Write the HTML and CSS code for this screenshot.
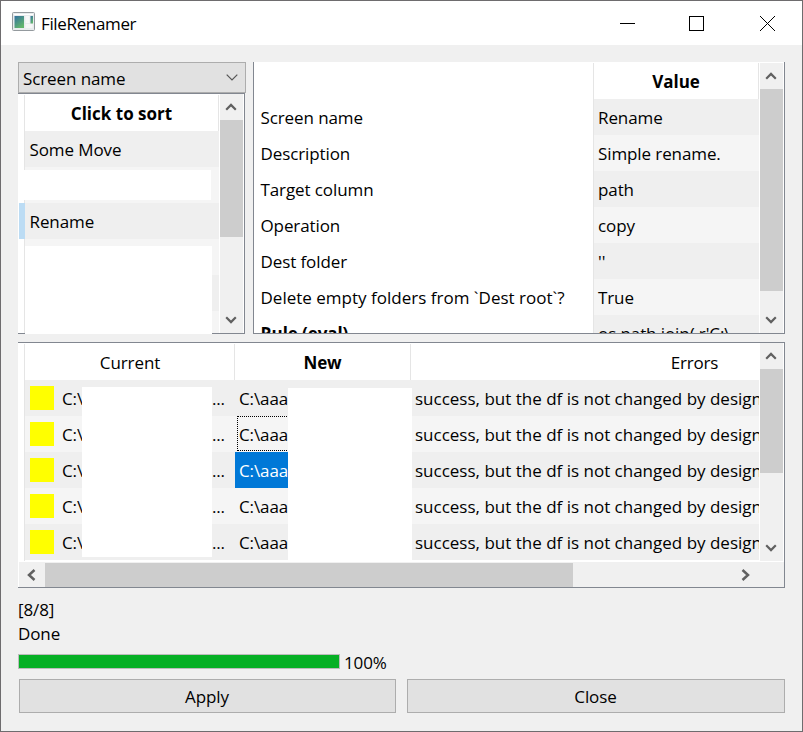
FILE: index.html
```
<!DOCTYPE html>
<html lang="en">
<head>
<meta charset="utf-8">
<title>FileRenamer</title>
<link rel="stylesheet" href="styles.css">
</head>
<body>
<svg width="0" height="0" class="defs">
  <symbol id="up" viewBox="0 0 12 8"><path d="M1.200 6.700 6 1.900l4.800 4.800" fill="none" stroke="#606060" stroke-width="2.200"/></symbol>
  <symbol id="down" viewBox="0 0 12 8"><path d="M1.200 1.300 6 6.100l4.800-4.800" fill="none" stroke="#606060" stroke-width="2.200"/></symbol>
</svg>
<div class="window">
  <header class="titlebar">
    <svg class="appicon" width="23" height="19" viewBox="0 0 23 19">
      <defs><linearGradient id="g" x1="0" y1="0" x2=".6" y2="1"><stop offset="0" stop-color="#3270a0"/><stop offset="1" stop-color="#63b66c"/></linearGradient></defs>
      <rect x=".5" y=".5" width="22" height="18" rx="1" fill="#e9ecee" stroke="#949a9e"/>
      <path d="M2 2.500h19" stroke="#fff"/>
      <rect x="2.500" y="4" width="9.500" height="12" fill="url(#g)"/>
      <rect x="13.500" y="4" width="4" height="7" fill="#f8f8f8"/><rect x="13.500" y="12" width="7" height="4" fill="#f6f6f6"/>
      <rect x="18.500" y="4" width="2.500" height="7.500" fill="url(#g)"/>
    </svg>
    <span class="title">FileRenamer</span>
    <svg class="winbtns" width="156" height="16" viewBox="0 0 156 16" fill="none" stroke="#000" shape-rendering="crispEdges">
      <path d="M0 8.500h15M69.500 1.500h14v14h-14z"/><path d="M140 1l15 15M155 1l-15 15" shape-rendering="auto"/>
    </svg>
  </header>
  <main class="content">
    <div class="top">
      <section class="left">
        <div class="combo"><span>Screen name</span><svg width="12" height="7" viewBox="0 0 12 7"><path d="M.7.700 6 6 11.300.7" fill="none" stroke="#555" stroke-width="1.200"/></svg></div>
        <div class="panel list">
          <div class="gutter"><i class="current"></i></div>
          <div class="rows">
            <div class="head sort"><span>Click to sort</span></div>
            <div class="row">Some Move</div><div class="row"></div><div class="row">Rename</div><div class="row"></div><div class="row"></div><div class="row"></div>
          </div>
          <div class="vscroll"><div class="arrow"><svg><use href="#up"/></svg></div><div class="thumb"></div><div class="arrow end"><svg><use href="#down"/></svg></div></div>
          <i class="mask m1"></i><i class="mask m2"></i>
        </div>
      </section>
      <section class="panel props">
        <div class="names"><div class="head"></div><div>Screen name</div><div>Description</div><div>Target column</div><div>Operation</div><div>Dest folder</div><div class="delete">Delete empty folders from `Dest root`?</div><div class="bold">Rule (eval)</div></div>
        <div class="rows values"><div class="head"><span>Value</span></div><div class="row">Rename</div><div class="row">Simple rename.</div><div class="row">path</div><div class="row">copy</div><div class="row">''</div><div class="row">True</div><div class="row">os.path.join( r'C:\</div></div>
        <div class="vscroll"><div class="arrow"><svg><use href="#up"/></svg></div><div class="thumb"></div><div class="arrow end"><svg><use href="#down"/></svg></div></div>
      </section>
    </div>
    <section class="panel results">
      <div class="grid">
        <div class="gutter"></div>
        <div class="rows table">
          <div class="line head"><span class="c1">Current</span><span class="c2 bold">New</span><span class="c3">Errors</span></div>
          <div class="line row"><span class="c1"><i></i><b>C:\</b><em>...</em></span><span class="c2">C:\aaa</span><span class="c3">success, but the df is not changed by design</span></div>
          <div class="line row"><span class="c1"><i></i><b>C:\</b><em>...</em></span><span class="c2 focus">C:\aaa</span><span class="c3">success, but the df is not changed by design</span></div>
          <div class="line row"><span class="c1"><i></i><b>C:\</b><em>...</em></span><span class="c2 selected">C:\aaa</span><span class="c3">success, but the df is not changed by design</span></div>
          <div class="line row"><span class="c1"><i></i><b>C:\</b><em>...</em></span><span class="c2">C:\aaa</span><span class="c3">success, but the df is not changed by design</span></div>
          <div class="line row"><span class="c1"><i></i><b>C:\</b><em>...</em></span><span class="c2">C:\aaa</span><span class="c3">success, but the df is not changed by design</span></div>
        </div>
        <div class="vscroll"><div class="arrow"><svg><use href="#up"/></svg></div><div class="thumb"></div><div class="arrow end"><svg><use href="#down"/></svg></div></div>
      </div>
      <div class="hscroll"><svg class="prev" width="9" height="12" viewBox="0 0 9 12"><path d="M7.500 1 2 6l5.500 5" fill="none" stroke="#606060" stroke-width="2.500"/></svg><div class="hthumb"></div><svg class="next" width="9" height="12" viewBox="0 0 9 12"><path d="M1.500 1 7 6l-5.500 5" fill="none" stroke="#606060" stroke-width="2.500"/></svg></div>
      <i class="mask m3"></i><i class="mask m4"></i>
    </section>
    <div class="status"><div>[8/8]</div><div>Done</div></div>
    <div class="progress"><div class="bar"><div class="fill" style="width:100%"></div></div><span>100%</span></div>
    <div class="buttons"><button>Apply</button><button>Close</button></div>
  </main>
</div>
</body>
</html>
```
FILE: styles.css
```
* { box-sizing: border-box; }
body { margin: 0; overflow: hidden; font: 17px/38px "Open Sans", sans-serif; letter-spacing: -.1px; color: #000; }
.defs { position: absolute; }
.window { width: 803px; height: 732px; border: 1px solid #6e6c6e; background: #f0f0f0; }
.titlebar { height: 44px; background: #fff; display: flex; align-items: center; padding: 0 26px 0 11px; }
.appicon { margin-top: -3px; }
.title { margin-left: 6px; margin-top: 1px; letter-spacing: -.35px; }
.winbtns { margin-left: auto; margin-top: -1px; }
.content { padding: 17px 17px 0; }
.top { display: flex; gap: 7px; height: 272px; }
.left { width: 228px; }
.combo { width: 228px; height: 31px; border: 1px solid #adadad; background: #e1e1e1; display: flex; align-items: center; justify-content: space-between; padding: 0 7px 0 4px; line-height: 29px; }
.combo span { padding-top: 2px; }
.panel { position: relative; display: flex; background: #fff; overflow: hidden; border-right: 1px solid #828790; border-bottom: 1px solid #828790; }
.list { width: 227px; height: 241px; border-top: 1px solid #828790; padding-top: 1px; overflow: visible; clip-path: inset(0); }
.gutter { width: 7px; border-right: 1px solid #e5e5e5; flex: none; }
.list .gutter { padding: 108px 0 0 1px; }
.current { display: block; width: 6px; height: 36px; background: #bcdcf4; }
.rows { overflow: hidden; white-space: nowrap; }
.list .rows { width: 194px; height: 238px; }
.head { height: 36px; background: #fff; text-align: center; font-weight: bold; letter-spacing: 0; }
.sort { border-right: 1px solid #e5e5e5; }
.row { height: 36px; padding-left: 4.500px; background: #efefef; }
.row:nth-child(odd) { background: #f5f5f5; }
.vscroll { width: 23px; margin-left: 1px; background: #f0f0f0; display: flex; flex-direction: column; flex: none; margin-top: -1px; }
.arrow { height: 26px; flex: none; display: flex; align-items: center; justify-content: center; padding-right: 1px; }
.arrow svg { width: 12px; height: 8px; }
.end { margin-top: auto; }
.thumb { background: #cdcdcd; height: 117px; }
.mask { position: absolute; background: #fff; }
.m1 { left: 0; top: 76px; width: 193px; height: 30px; }
.m2 { left: 7px; top: 152px; width: 187px; height: 88px; }
.props { width: 532px; height: 272px; border-left: 1px solid #828790; padding-top: 1px; }
.names { width: 340px; border-right: 1px solid #e5e5e5; padding-left: 6.500px; white-space: nowrap; flex: none; }
.names div { height: 36px; }
.names .delete { letter-spacing: .01px; }
.bold { font-weight: bold; }
.values { width: 165px; }
.values .row { padding-left: 4px; }
.values .head { border-right: 1px solid #e5e5e5; }
.props .vscroll { margin-top: 0; }
.props .thumb { height: 202px; }
.results { width: 767px; height: 246px; margin-top: 8px; flex-direction: column; border-top: 1px solid #828790; padding-top: 1px; }
.grid { display: flex; height: 217px; flex: none; }
.table { width: 734px; }
.line.row { padding: 0; }
.line { display: flex; }
.line span { height: 36px; flex: none; }
.c1 { width: 210px; display: flex; }
.c2 { width: 176px; padding-left: 4px; }
.c3 { width: 570px; padding-left: 4px; letter-spacing: 0; }
.head.line { font-weight: normal; letter-spacing: -.1px; }
.head .c1 { display: block; padding-left: 1px; border-right: 1px solid #e5e5e5; }
.head .c2 { font-weight: bold; padding: 0; border-right: 1px solid #e5e5e5; }
.head .c3 { padding: 0 3px 0 0; letter-spacing: -.2px; }
.c1 i { width: 24px; height: 24px; background: #ff0; margin: 6px 8px 0 5px; }
.c1 b { font-weight: normal; }
.c1 em { font-style: normal; margin-left: auto; margin-right: 10px; }
.selected { background: #0078d7; color: #fff; }
.focus { position: relative; }
.focus::before { content: ""; position: absolute; inset: 0 0 1px 2px; border: 1px dotted #000; }
.results .vscroll { height: 218px; }
.results .thumb { height: 104px; }
.hscroll { margin: 1px 0 0 1px; height: 25px; background: #f0f0f0; display: flex; align-items: center; padding: 0 34px 0 8px; }
.hthumb { height: 24px; width: 528px; margin-left: 9px; background: #cdcdcd; }
.next { margin-left: auto; }
.m3 { left: 64px; top: 44px; width: 130px; height: 170px; }
.m4 { left: 270px; top: 45px; width: 124px; height: 172px; }
.status { line-height: 24px; padding-top: 10px; }
.progress { display: flex; align-items: center; height: 31px; line-height: 27px; gap: 4px; }
.progress span { padding-top: 1px; }
.bar { width: 322px; height: 15px; border: 1px solid #bcbcbc; }
.fill { height: 100%; background: #06b025; }
.buttons { display: grid; grid-template-columns: 377px 378px; gap: 11px; padding: 2px 0 0 1px; }
button { height: 34px; border: 1px solid #adadad; background: #e1e1e1; font: inherit; letter-spacing: inherit; color: inherit; padding: 2px 1px 0 0; line-height: 30px; }
```
